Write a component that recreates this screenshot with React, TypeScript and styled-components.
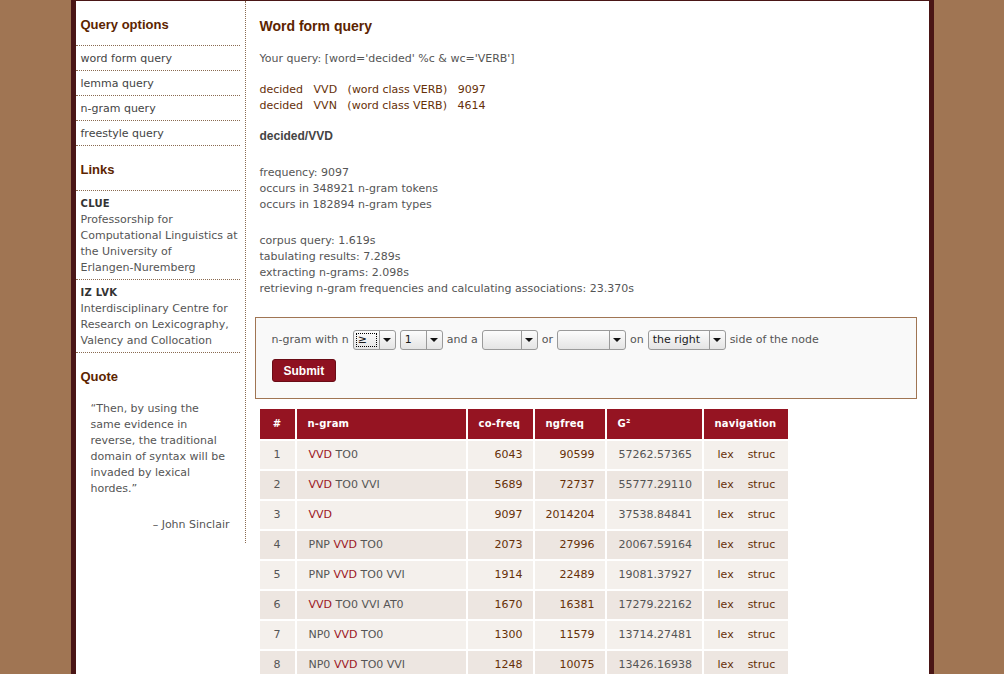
import styled, { createGlobalStyle } from "styled-components";

const GlobalStyle = createGlobalStyle`
  * { box-sizing: border-box; }
  html, body { margin: 0; padding: 0; }
  body {
    background: #a07553;
    font-family: "DejaVu Sans", Verdana, sans-serif;
    font-size: 11px;
    line-height: 16px;
    color: #555;
  }
`;

const Page = styled.div`
  width: 863px;
  min-height: 100vh;
  margin: 0 auto;
  display: flex;
  align-items: flex-start;
  background: #fff;
  border: 5px solid #4a1616;
  border-top-width: 1px;
  border-bottom: none;
`;

/* sidebar */

const Sidebar = styled.aside`
  width: 170px;
  flex-shrink: 0;
  padding: 0 5px 10px 0;
  border-right: 1px dotted #8a6a50;
`;

const SideHeading = styled.h3<{ $ruled?: boolean }>`
  margin: 0;
  height: 45px;
  padding: 15px 0 0 5px;
  font: bold 13px/18px "Liberation Sans", Arial, sans-serif;
  color: #5c2400;
  border-bottom: ${(p) => (p.$ruled ? "1px dotted #8a6a50" : "none")};
`;

const MenuItem = styled.a`
  display: block;
  height: 25px;
  padding: 5px 0 0 5px;
  color: #444;
  text-decoration: none;
  border-bottom: 1px dotted #8a6a50;
`;

const LinkBlock = styled.div`
  padding: 5px 0 3px 5px;
  color: #555;
  border-bottom: 1px dotted #8a6a50;
`;

const LinkTitle = styled.div`
  font-size: 10px;
  font-weight: bold;
  letter-spacing: 0.3px;
  color: #333;
`;

const QuoteText = styled.p`
  margin: 3px 0 0;
  padding: 0 5px 0 15px;
  color: #555;
`;

const QuoteAuthor = styled.p`
  margin: 20px 0 0;
  padding-right: 10px;
  text-align: right;
  color: #555;
`;

/* main column */

const Main = styled.main`
  flex: 1;
  padding: 0 12px 20px 9px;
`;

const Title = styled.h1`
  margin: 0 0 0 5px;
  padding-top: 16px;
  font: bold 14px/18px "Liberation Sans", Arial, sans-serif;
  color: #5c2400;
`;

const Para = styled.p<{ $top: number; $tone?: "brown" | "grey" }>`
  margin: ${(p) => p.$top}px 0 0 5px;
  color: ${(p) => (p.$tone === "brown" ? "#663008" : "#555")};
  white-space: pre;
`;

const SubTitle = styled.h2`
  margin: 14px 0 0 5px;
  font: bold 12px/16px "Liberation Sans", Arial, sans-serif;
  color: #444;
`;

const FormBox = styled.form`
  margin-top: 20px;
  padding: 12px 15px 16px 16px;
  background: #f9f9f9;
  border: 1px solid #a07553;
`;

const FormRow = styled.div`
  display: flex;
  align-items: center;
  gap: 4px;
  height: 20px;
  color: #555;
`;

const Select = styled.span<{ $w: number }>`
  display: inline-flex;
  width: ${(p) => p.$w}px;
  height: 20px;
  border: 1px solid #9a9a9a;
  border-radius: 3px;
  background: linear-gradient(#fcfcfc, #e4e4e4);
  color: #1a1a1a;
  overflow: hidden;
`;

const SelectValue = styled.span<{ $focus?: boolean }>`
  flex: 1;
  padding: 0 4px;
  line-height: 18px;
  ${(p) => p.$focus && "outline: 1px dotted #000; outline-offset: -3px;"}
`;

const SelectArrow = styled.span`
  width: 16px;
  display: flex;
  align-items: center;
  justify-content: center;
  border-left: 1px solid #9a9a9a;
  border-radius: 0 2px 2px 0;
  &::after {
    content: "";
    border-left: 4px solid transparent;
    border-right: 4px solid transparent;
    border-top: 4px solid #111;
  }
`;

const SubmitButton = styled.button`
  display: block;
  margin-top: 9px;
  height: 23px;
  padding: 0 11px;
  font: bold 12px "Liberation Sans", Arial, sans-serif;
  color: #fff;
  background: #8e1120;
  border: 1px solid #6a0c16;
  border-radius: 3px;
`;

/* results table */

const Grid = styled.table`
  width: 528px;
  margin: 10px 0 0 5px;
  table-layout: fixed;
  border-collapse: separate;
  border-spacing: 0;
`;

const Th = styled.th<{ $w: number; $center?: boolean }>`
  width: ${(p) => p.$w}px;
  height: 32px;
  padding: 0 0 0 ${(p) => (p.$center ? 0 : 11)}px;
  text-align: ${(p) => (p.$center ? "center" : "left")};
  font-size: 10px;
  font-weight: bold;
  letter-spacing: 0.2px;
  color: #fff;
  background: #951422;
  border-right: 2px solid #fff;
  border-bottom: 2px solid #fff;
  &:last-child { border-right: 0; }
`;

const Row = styled.tr`
  background: #f4f0ec;
  &:nth-child(even) { background: #ede6e1; }
`;

const Td = styled.td<{ $align?: "left" | "right" | "center"; $tone?: "brown" | "grey"; $pad?: number }>`
  height: 30px;
  padding: ${(p) =>
    p.$align === "right" ? "0 10px 0 0" : p.$align === "center" ? "0" : `0 0 0 ${p.$pad ?? 12}px`};
  text-align: ${(p) => p.$align ?? "left"};
  color: ${(p) => (p.$tone === "brown" ? "#663008" : "#555")};
  border-right: 2px solid #fff;
  border-bottom: 2px solid #fff;
  white-space: nowrap;
  &:last-child { border-right: 0; }
`;

const Tag = styled.span<{ $node: boolean }>`
  color: ${(p) => (p.$node ? "#9c1624" : "#555")};
`;

const NavLink = styled.a`
  color: #663008;
  text-decoration: none;
  & + & { margin-left: 14px; }
`;

const rows = [
  { gram: "VVD TO0", co: 6043, ng: 90599, g2: "57262.57365" },
  { gram: "VVD TO0 VVI", co: 5689, ng: 72737, g2: "55777.29110" },
  { gram: "VVD", co: 9097, ng: 2014204, g2: "37538.84841" },
  { gram: "PNP VVD TO0", co: 2073, ng: 27996, g2: "20067.59164" },
  { gram: "PNP VVD TO0 VVI", co: 1914, ng: 22489, g2: "19081.37927" },
  { gram: "VVD TO0 VVI AT0", co: 1670, ng: 16381, g2: "17279.22162" },
  { gram: "NP0 VVD TO0", co: 1300, ng: 11579, g2: "13714.27481" },
  { gram: "NP0 VVD TO0 VVI", co: 1248, ng: 10075, g2: "13426.16938" },
];

const NGram = ({ gram }: { gram: string }) => (
  <>
    {gram.split(" ").map((t, i) => (
      <span key={i}>
        {i > 0 && " "}
        <Tag $node={t === "VVD"}>{t}</Tag>
      </span>
    ))}
  </>
);

const App = () => (
  <>
    <GlobalStyle />
    <Page>
      <Sidebar>
        <SideHeading $ruled>Query options</SideHeading>
        <MenuItem>word form query</MenuItem>
        <MenuItem>lemma query</MenuItem>
        <MenuItem>n-gram query</MenuItem>
        <MenuItem>freestyle query</MenuItem>

        <SideHeading $ruled>Links</SideHeading>
        <LinkBlock>
          <LinkTitle>CLUE</LinkTitle>
          Professorship for
          <br />
          Computational Linguistics at
          <br />
          the University of
          <br />
          Erlangen-Nuremberg
        </LinkBlock>
        <LinkBlock>
          <LinkTitle>IZ LVK</LinkTitle>
          Interdisciplinary Centre for
          <br />
          Research on Lexicography,
          <br />
          Valency and Collocation
        </LinkBlock>

        <SideHeading>Quote</SideHeading>
        <QuoteText>
          “Then, by using the
          <br />
          same evidence in
          <br />
          reverse, the traditional
          <br />
          domain of syntax will be
          <br />
          invaded by lexical
          <br />
          hordes.”
        </QuoteText>
        <QuoteAuthor>– John Sinclair</QuoteAuthor>
      </Sidebar>

      <Main>
        <Title>Word form query</Title>
        <Para $top={16}>Your query: [word='decided' %c &amp; wc='VERB']</Para>
        <Para $top={15} $tone="brown">
          {"decided   VVD   (word class VERB)   9097\ndecided   VVN   (word class VERB)   4614"}
        </Para>
        <SubTitle>decided/VVD</SubTitle>
        <Para $top={21}>
          {"frequency: 9097\noccurs in 348921 n-gram tokens\noccurs in 182894 n-gram types"}
        </Para>
        <Para $top={20}>
          {"corpus query: 1.619s\ntabulating results: 7.289s\nextracting n-grams: 2.098s\nretrieving n-gram frequencies and calculating associations: 23.370s"}
        </Para>

        <FormBox onSubmit={(e) => e.preventDefault()}>
          <FormRow>
            n-gram with n
            <Select $w={43}>
              <SelectValue $focus>≥</SelectValue>
              <SelectArrow />
            </Select>
            <Select $w={43}>
              <SelectValue>1</SelectValue>
              <SelectArrow />
            </Select>
            and a
            <Select $w={56}>
              <SelectValue />
              <SelectArrow />
            </Select>
            or
            <Select $w={69}>
              <SelectValue />
              <SelectArrow />
            </Select>
            on
            <Select $w={78}>
              <SelectValue>the right</SelectValue>
              <SelectArrow />
            </Select>
            side of the node
          </FormRow>
          <SubmitButton type="submit">Submit</SubmitButton>
        </FormBox>

        <Grid>
          <thead>
            <tr>
              <Th $w={37} $center>#</Th>
              <Th $w={171}>n-gram</Th>
              <Th $w={67}>co-freq</Th>
              <Th $w={72}>ngfreq</Th>
              <Th $w={97}>G²</Th>
              <Th $w={84}>navigation</Th>
            </tr>
          </thead>
          <tbody>
            {rows.map((r, i) => (
              <Row key={i}>
                <Td $align="center">{i + 1}</Td>
                <Td>
                  <NGram gram={r.gram} />
                </Td>
                <Td $align="right" $tone="brown">{r.co}</Td>
                <Td $align="right" $tone="brown">{r.ng}</Td>
                <Td>{r.g2}</Td>
                <Td $pad={14}>
                  <NavLink>lex</NavLink>
                  <NavLink>struc</NavLink>
                </Td>
              </Row>
            ))}
          </tbody>
        </Grid>
      </Main>
    </Page>
  </>
);

export default App;
